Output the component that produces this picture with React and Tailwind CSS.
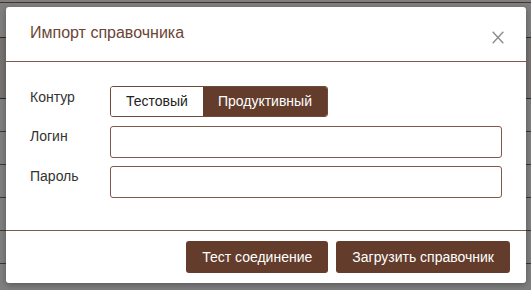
import React from "react";

const bgRows = [
  { h: "h-[2px]", cls: "bg-[#7f7f7f] border-b border-[#4a3329]" },
  { h: "h-[34px]", cls: "bg-[#7f7f7f] border-b border-[#2f2b29]" },
  { h: "h-[60px]", cls: "bg-[#767371] border-b border-[#2f2b29]" },
  { h: "h-[32px]", cls: "bg-[#7f7f7f] border-b border-[#3a3634]" },
  { h: "h-[32px]", cls: "bg-[#7f7f7f] border-b border-[#3a3634]" },
  { h: "h-[32px]", cls: "bg-[#7f7f7f] border-b border-[#3a3634]" },
  { h: "h-[32px]", cls: "bg-[#7f7f7f] border-b border-[#3a3634]" },
  { h: "h-[32px]", cls: "bg-[#7f7f7f] border-b border-[#3a3634]" },
];

export default function App() {
  return (
    <div
      className="relative w-[531px] h-[290px] overflow-hidden bg-[#7f7f7f]"
      style={{ fontFamily: '"Liberation Sans", Arial, sans-serif' }}
    >
      <div className="flex flex-col">
        {bgRows.map((r, i) => (
          <div key={i} className={`${r.h} ${r.cls} box-content`} />
        ))}
      </div>

      <div className="absolute left-[6px] top-[7px] w-[520px] h-[276px] bg-white rounded-[3px] flex flex-col shadow-[0_2px_6px_rgba(0,0,0,0.3)]">
        <div className="h-[54px] box-content border-b border-[#7d5b4f] flex items-center justify-between pl-6 pr-[22px]">
          <span className="text-[16px] text-[#6b4536] leading-none mb-[2px]">Импорт справочника</span>
          <svg width="12" height="13" viewBox="0 0 12 13" className="mt-[6px]">
            <path d="M0.7 0.7 L11.3 12.3 M11.3 0.7 L0.7 12.3" stroke="#8c8c8c" strokeWidth="1.4" fill="none" />
          </svg>
        </div>

        <div className="h-[168px] px-6 pt-6 flex flex-col gap-2">
          <div className="flex">
            <div className="w-[80px] text-[14px] leading-5 text-[#333] pt-[1px]">Контур</div>
            <div className="flex h-[31px] rounded-[3px] overflow-hidden border border-[#6e4a3b]">
              <button className="px-[15px] text-[14px] text-[#222] bg-white">Тестовый</button>
              <button className="px-[15px] text-[14px] text-white bg-[#633c2b]">Продуктивный</button>
            </div>
          </div>
          <div className="flex pt-[1px]">
            <div className="w-[80px] text-[14px] leading-5 text-[#333]">Логин</div>
            <input className="flex-1 h-[32px] border border-[#7d5a4b] rounded-[3px] outline-none px-2 text-[14px]" />
          </div>
          <div className="flex">
            <div className="w-[80px] text-[14px] leading-5 text-[#333]">Пароль</div>
            <input type="password" className="flex-1 h-[32px] border border-[#7d5a4b] rounded-[3px] outline-none px-2 text-[14px]" />
          </div>
        </div>

        <div className="flex-1 border-t border-[#7d5b4f] flex items-start justify-end gap-2 pt-[10px] pr-4">
          <button className="h-[32px] px-4 rounded-[3px] bg-[#633c2b] text-white text-[14px]">Тест соединение</button>
          <button className="h-[32px] px-4 rounded-[3px] bg-[#633c2b] text-white text-[14px]">Загрузить справочник</button>
        </div>
      </div>
    </div>
  );
}
